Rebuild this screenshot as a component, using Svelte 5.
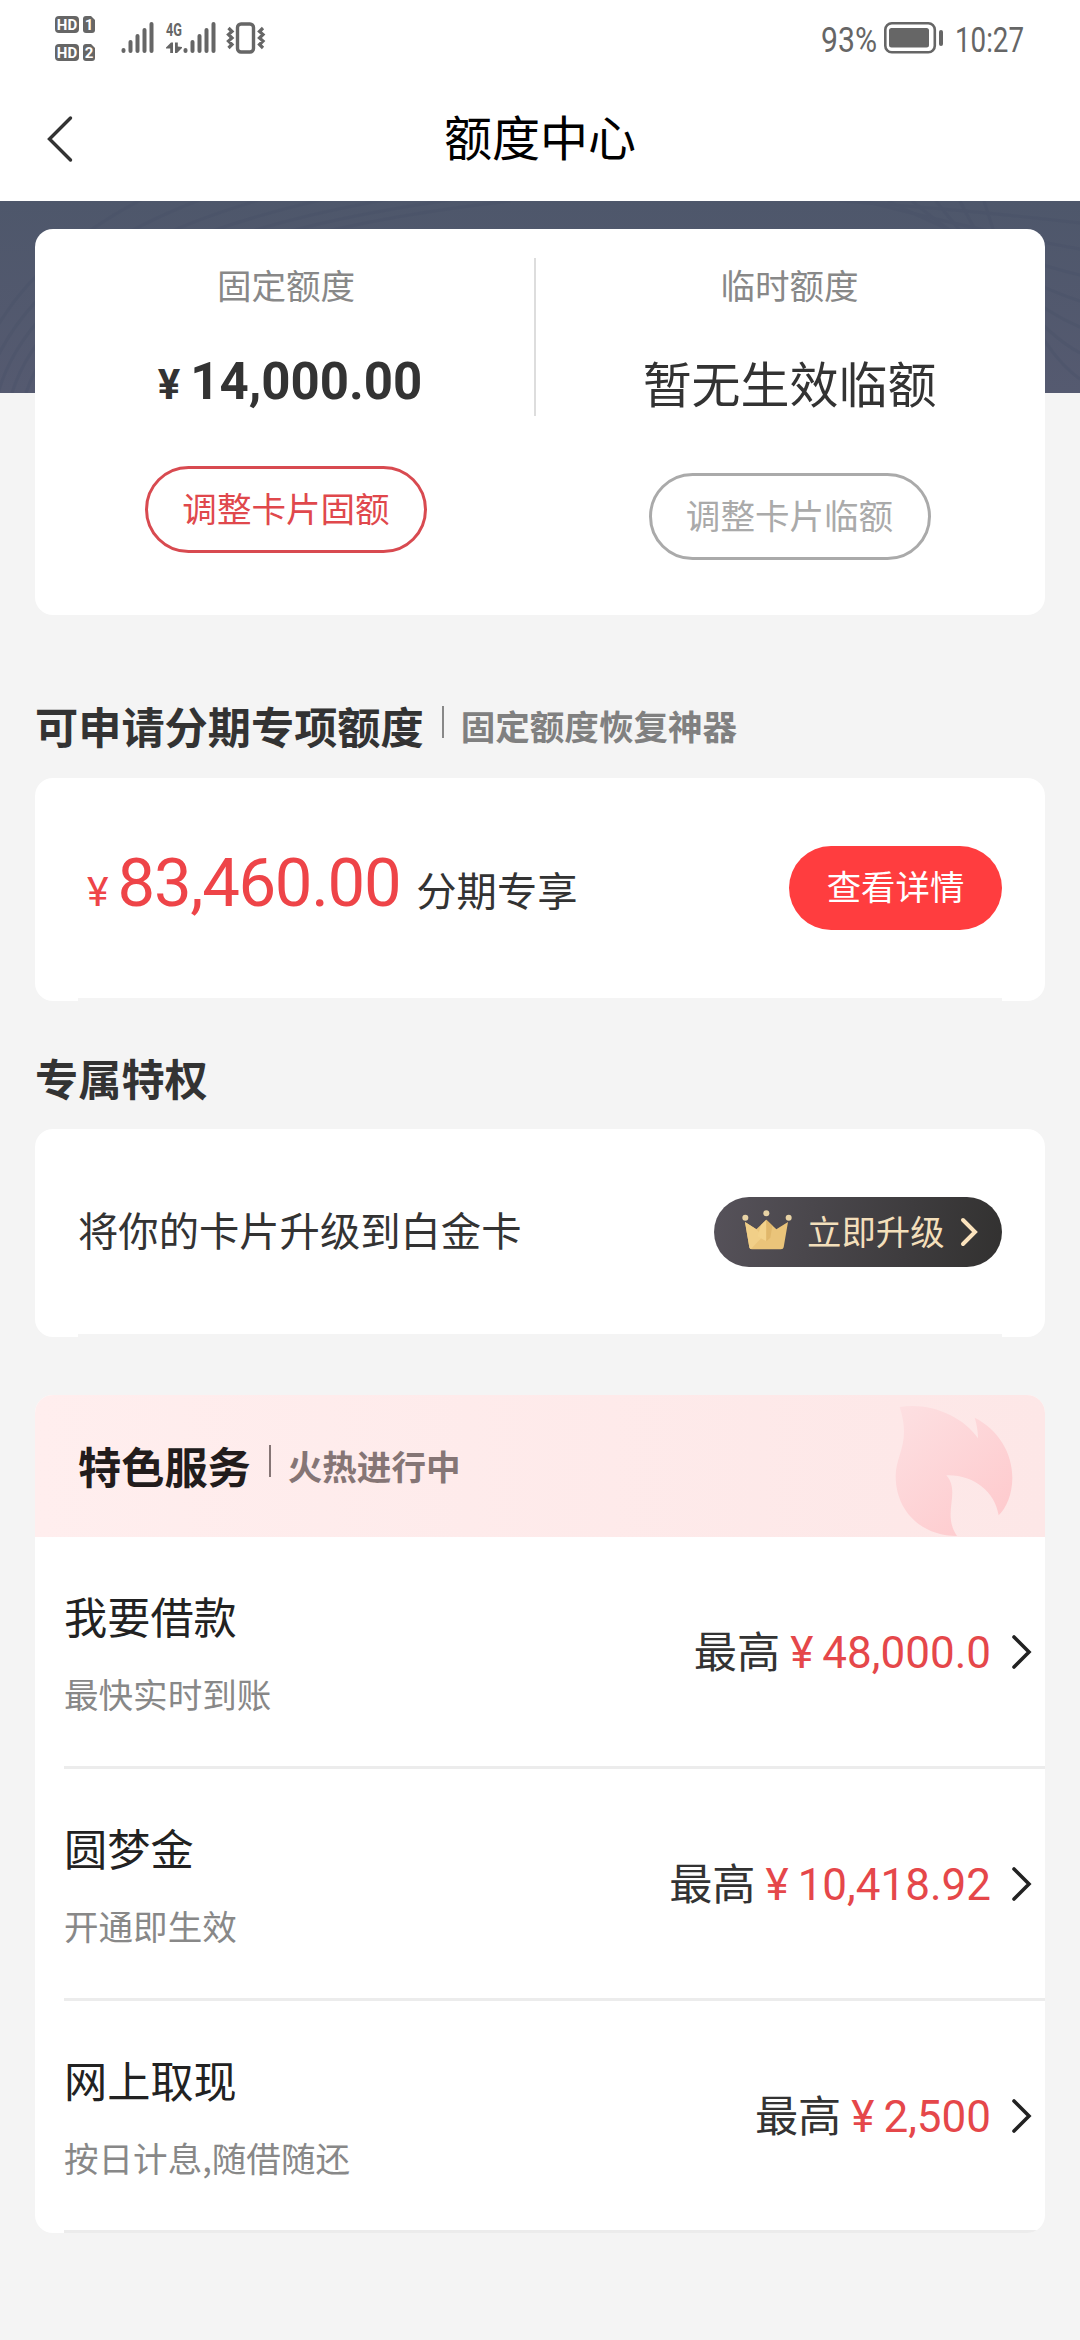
<script>
  const services = [
    { name: '我要借款', desc: '最快实时到账', amount: '48,000.0' },
    { name: '圆梦金', desc: '开通即生效', amount: '10,418.92' },
    { name: '网上取现', desc: '按日计息,随借随还', amount: '2,500' }
  ];

  // x, top of each signal bar
  const bars = [[2.5, 28], [9.5, 20], [16.5, 14], [23.5, 8], [30.5, 2]];
  const sims = [1, 2];
</script>

{#snippet signal()}
  <svg class="signal" width="34" height="32" viewBox="0 0 34 32">
    {#each bars as [x, top]}
      <path d="M{x} {top}V29" stroke="#666" stroke-width="4" stroke-linecap="round" />
    {/each}
  </svg>
{/snippet}

<div class="page">
  <div class="status">
    <div class="sims">
      {#each sims as n}
        <svg width="40" height="17" viewBox="0 0 40 17">
          <rect width="24" height="17" rx="4" fill="#666" />
          <path d="M31 0h5l4 4v10q0 3-3 3h-6q-3 0-3-3V3q0-3 3-3z" fill="#666" />
          <text x="12" y="13.8" text-anchor="middle" class="hd">HD</text>
          <text x="34" y="13.8" text-anchor="middle" class="hd">{n}</text>
        </svg>
      {/each}
    </div>
    {@render signal()}
    <svg class="net" width="17" height="32" viewBox="0 0 17 32">
      <text x="0" y="14" textLength="16" lengthAdjust="spacingAndGlyphs" class="g4">4G</text>
      <path d="M7 20.500V31H4.200V26.500H0V25.500L5 20.500ZM9 20.500H11.800V24.500L16 25V26L11 31H9Z" fill="#666" />
    </svg>
    {@render signal()}
    <svg class="vibrate" width="40" height="32" viewBox="0 0 40 32">
      <rect x="11.5" y="2" width="16" height="28" rx="3.5" fill="none" stroke="#666" stroke-width="3.4" />
      <path d="M2.500 6l3.500 3.500-3.500 3 3.500 3.500-3.500 3 3.500 3.500-3.500 3.500M37 6l-3.500 3.500 3.500 3-3.500 3.500 3.500 3-3.500 3.500 3.500 3.500" fill="none" stroke="#666" stroke-width="3.200" />
    </svg>
    <div class="status-right">
      <svg width="57" height="44" viewBox="0 0 57 44">
        <text x="0" y="29.5" textLength="56" lengthAdjust="spacingAndGlyphs" class="num">93%</text>
      </svg>
      <svg class="battery" width="60" height="32" viewBox="0 0 60 32">
        <rect x="1.3" y="1.3" width="49.5" height="29" rx="6.5" fill="none" stroke="#666" stroke-width="2.6" />
        <rect x="5" y="6" width="40" height="19.5" rx="2.5" fill="#666" />
        <rect x="55" y="8" width="4" height="16" rx="2" fill="#666" />
      </svg>
      <svg width="70" height="44" viewBox="0 0 70 44">
        <text x="0" y="29.5" textLength="69" lengthAdjust="spacingAndGlyphs" class="num">10:27</text>
      </svg>
    </div>
  </div>

  <header>
    <svg width="28" height="48" viewBox="0 0 28 48">
      <path d="M24.5 3L3.5 24L24.5 45" fill="none" stroke="#333" stroke-width="3.4" stroke-linecap="round" />
    </svg>
    <h1>额度中心</h1>
  </header>

  <svg class="banner" width="1080" height="192" viewBox="0 0 1080 192">
    <defs>
      <linearGradient id="navy" x1="0" y1="0" x2="0" y2="1">
        <stop offset="0" stop-color="#4e576b" />
        <stop offset="1" stop-color="#555a70" />
      </linearGradient>
    </defs>
    <rect width="1080" height="192" fill="url(#navy)" />
    <g fill="none" stroke="#485168" stroke-width="3" opacity="0.35">
      {#each [0, 1, 2, 3, 4, 5, 6] as i}
        <path d="M{-30 + i * 14} 192Q{i * 18} {70 - i * 4} {150 + i * 60} {-6 + i}" />
        <path d="M{840 + i * 24} 0Q{980 + i * 8} {10 + i * 22} 1080 {22 + i * 26}" />
      {/each}
    </g>
  </svg>

  <main>
    <section class="card limits">
      <div class="limit">
        <span class="label">固定额度</span>
        <div class="fixed"><span>¥</span>14,000.00</div>
        <button class="outline">调整卡片固额</button>
      </div>
      <div class="divider"></div>
      <div class="limit">
        <span class="label">临时额度</span>
        <div class="temp">暂无生效临额</div>
        <button class="outline disabled">调整卡片临额</button>
      </div>
    </section>

    <div class="heading first">
      <h2>可申请分期专项额度</h2>
      <i></i>
      <span>固定额度恢复神器</span>
    </div>
    <section class="card installment">
      <div class="row">
        <p class="special"><span class="yen">¥</span><b>83,460.00</b><span class="tag">分期专享</span></p>
        <button class="detail">查看详情</button>
      </div>
      <hr />
    </section>

    <div class="heading second">
      <h2>专属特权</h2>
    </div>
    <section class="card upgrade">
      <div class="row">
        <p>将你的卡片升级到白金卡</p>
        <button class="gold">
          <svg class="crown" width="50" height="40" viewBox="187 1131 150 120">
            <g fill="#e8d3a5">
              <circle cx="197" cy="1154" r="9" />
              <circle cx="260" cy="1141" r="9" />
              <circle cx="327" cy="1154" r="9" />
            </g>
            <path d="M196 1167L230 1189L260 1160L290 1189L325 1167L312 1243Q311 1249 304 1249H216Q210 1249 209 1243Z" fill="#eac47a" />
            <path d="M196 1167L230 1189L250 1210L214 1248Q210 1248 209 1243Z" fill="#f1cf88" />
            <path d="M260 1160L244 1176L234 1210L260 1225Z" fill="#f3d28b" />
            <path d="M260 1160L278 1178L272 1214L260 1225Z" fill="#e0b76b" />
          </svg>
          <span>立即升级</span>
          <svg width="18" height="30" viewBox="0 0 18 30">
            <path d="M3 3L15 15L3 27" fill="none" stroke="#fbe3bd" stroke-width="4" stroke-linecap="round" />
          </svg>
        </button>
      </div>
      <hr />
    </section>

    <section class="card services">
      <div class="hot">
        <h2>特色服务</h2>
        <i></i>
        <span>火热进行中</span>
        <svg class="flame" width="120" height="142" viewBox="640 47 360 426">
          <defs>
            <linearGradient id="fire" x1="0" y1="0" x2="0.8" y2="1">
              <stop offset="0" stop-color="#fde0e2" />
              <stop offset="1" stop-color="#fecacd" />
            </linearGradient>
          </defs>
          <path
            d="M660 83C750 68 850 110 895 177C895 155 890 130 885 115C955 150 998 220 998 295C998 345 980 385 957 408C945 335 880 285 800 288C845 340 785 400 832 470C725 470 648 395 648 290C648 225 695 190 660 83Z"
            fill="url(#fire)"
          />
        </svg>
      </div>
      {#each services as s}
        <div class="service">
          <div class="info">
            <h3>{s.name}</h3>
            <small>{s.desc}</small>
          </div>
          <div class="max">最高<em><span>¥</span>{s.amount}</em></div>
          <svg width="22" height="36" viewBox="0 0 22 36">
            <path d="M3 3L18 18L3 33" fill="none" stroke="#222" stroke-width="3.6" stroke-linecap="round" />
          </svg>
        </div>
      {/each}
    </section>
  </main>
</div>

<style>
  :global(body) {
    background: #f4f4f4;
  }
  .page {
    width: 1080px;
    height: 2340px;
    overflow: hidden;
    background: #f4f4f4;
    color: #333;
    font-family: 'Noto Sans CJK SC', sans-serif;
  }
  svg {
    display: block;
    flex: none;
    overflow: visible;
  }
  .banner {
    overflow: hidden;
  }
  h1, h2, h3, p {
    margin: 0;
  }
  button {
    font: inherit;
    border: 0;
    padding: 0;
  }

  .status {
    display: flex;
    align-items: flex-start;
    box-sizing: border-box;
    height: 76px;
    padding: 22px 55px 0;
    background: #fff;
  }
  .sims {
    display: flex;
    flex-direction: column;
    gap: 11px;
    margin-top: -6px;
    margin-right: 26px;
  }
  .hd {
    font: bold 15px Roboto, sans-serif;
    fill: #fff;
  }
  .g4 {
    font: bold 18px Roboto, sans-serif;
    fill: #666;
  }
  .num {
    font: 35px Roboto, sans-serif;
    fill: #666;
  }
  .net {
    margin-left: 11px;
  }
  .vibrate {
    margin-left: 9px;
  }
  .status-right {
    display: flex;
    margin-left: auto;
  }
  .battery {
    margin: 0 11px 0 6px;
  }

  header {
    display: flex;
    align-items: center;
    height: 125px;
    padding: 0 46px;
    background: #fff;
  }
  h1 {
    flex: 1;
    margin-right: 28px;
    padding-bottom: 7px;
    text-align: center;
    font-size: 48px;
    font-weight: 400;
    line-height: 60px;
    color: #000;
  }

  main {
    position: relative;
    margin-top: -164px;
    padding: 0 35px;
  }
  .card {
    background: #fff;
    border-radius: 18px;
  }
  .limits {
    display: grid;
    grid-template-columns: 499px 2px 1fr;
    height: 386px;
  }
  .limit {
    display: flex;
    flex-direction: column;
    align-items: center;
    padding: 29px 2px 0 0;
  }
  .limit:first-child {
    padding: 29px 0 0 3px;
  }
  .divider {
    height: 158px;
    margin-top: 29px;
    background: #ddd;
  }
  .label {
    font-size: 34.56px;
    line-height: 52px;
    color: #888;
  }
  .fixed {
    margin-top: 37px;
    height: 119px;
    font: bold 51px/70px Roboto, sans-serif;
    padding-left: 8px;
  }
  .fixed span {
    margin-right: 10px;
    font-size: 42px;
  }
  .temp {
    margin-top: 42px;
    height: 121px;
    font-size: 48.96px;
    line-height: 60px;
  }
  .outline {
    box-sizing: border-box;
    width: 282px;
    height: 87px;
    border: 3px solid #d84a50;
    border-radius: 44px;
    background: #fff;
    color: #e0484c;
    font-size: 34.56px;
    line-height: 70px;
    padding-bottom: 6px;
  }
  .disabled {
    border-color: #aaa;
    color: #aaa;
  }

  .heading {
    display: flex;
    align-items: center;
  }
  .heading.first {
    height: 60px;
    margin: 80px 0 21px;
    padding-bottom: 2px;
  }
  .heading.second {
    height: 60px;
    margin: 46px 0 22px;
  }
  h2 {
    font-size: 43.2px;
    line-height: 56px;
    font-weight: 700;
  }
  i {
    width: 2px;
    height: 32px;
    margin: 0 17px 6px 18px;
    background: #888;
  }
  .heading span,
  .hot span {
    font-size: 34.56px;
    line-height: 50px;
    font-weight: 700;
    color: #808080;
  }

  .row {
    display: flex;
    align-items: center;
    justify-content: space-between;
    padding: 0 43px;
  }
  hr {
    height: 3px;
    margin: 0 43px;
    border: 0;
    background: #f4f4f4;
  }
  .installment .row {
    height: 219px;
    padding-bottom: 1px;
  }
  .special {
    display: flex;
    align-items: baseline;
    color: #ee4448;
    font-family: Roboto, sans-serif;
    line-height: 80px;
  }
  .yen {
    margin: 0 9px 0 9px;
    font-size: 41px;
  }
  .special b {
    font-size: 67px;
    font-weight: 400;
    letter-spacing: -1.3px;
  }
  .tag {
    margin-left: 16px;
    color: #333;
    font: 40.32px 'Noto Sans CJK SC', sans-serif;
  }
  .detail {
    width: 213px;
    height: 84px;
    padding-bottom: 6px;
    border-radius: 42px;
    background: #ff3d3f;
    color: #fff;
    font-size: 34.4px;
    line-height: 76px;
  }
  .upgrade .row {
    height: 205px;
    font-size: 40.32px;
  }
  .upgrade p {
    padding-bottom: 6px;
  }
  .gold {
    display: flex;
    align-items: center;
    width: 288px;
    height: 70px;
    padding-left: 28px;
    box-sizing: border-box;
    border-radius: 35px;
    background: linear-gradient(100deg, #56525a, #323130);
    color: #f3dfbb;
    font-size: 34.4px;
  }
  .gold span {
    margin: 0 15px;
    padding-bottom: 3px;
    line-height: 64px;
  }
  .crown {
    margin-bottom: 3px;
  }

  .services {
    margin-top: 58px;
    overflow: hidden;
  }
  .hot {
    display: flex;
    align-items: center;
    height: 142px;
    padding: 0 32px 0 43px;
    background: linear-gradient(90deg, #ffeeee, #fde7e7);
  }
  .hot h2 {
    padding-bottom: 3px;
    color: #221c1c;
  }
  .hot span {
    padding-bottom: 3px;
    color: #857575;
  }
  .hot i {
    margin-bottom: 10px;
    background: #857575;
  }
  .flame {
    margin-left: auto;
  }
  .service {
    display: flex;
    align-items: center;
    height: 229px;
    margin-left: 29px;
    padding-right: 12px;
    border-bottom: 3px solid #ececec;
  }
  .info {
    flex: 1;
  }
  h3 {
    color: #222;
    font-size: 43.2px;
    font-weight: 400;
    line-height: 60px;
  }
  small {
    display: block;
    margin-top: 22px;
    color: #888;
    font-size: 34.56px;
    line-height: 52px;
  }
  .max {
    margin-right: 20px;
    padding-bottom: 5px;
    font-size: 43.2px;
    line-height: 60px;
  }
  em {
    color: #e5474a;
    font: 44px Roboto, sans-serif;
  }
  em span {
    margin: 0 9px 0 10px;
  }
</style>
